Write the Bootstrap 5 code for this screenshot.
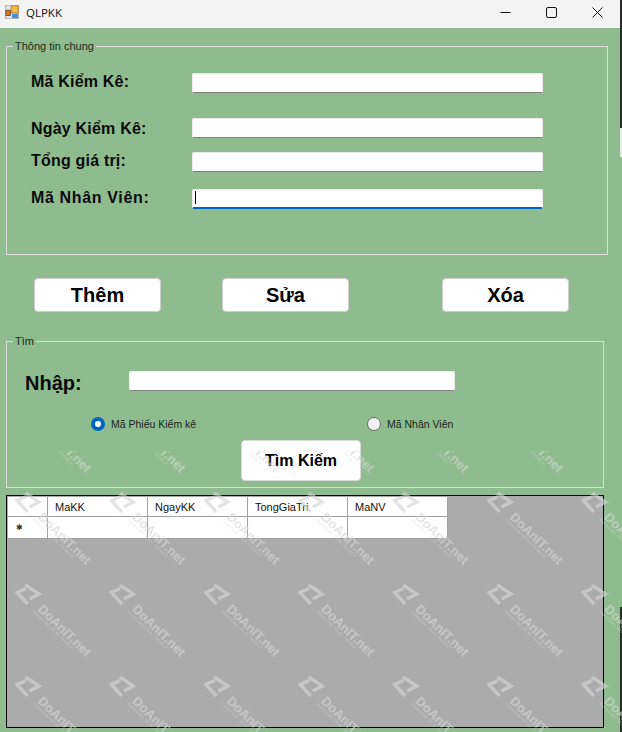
<!DOCTYPE html>
<html lang="vi">
<head>
<meta charset="utf-8">
<title>QLPKK</title>
<link href="https://cdn.jsdelivr.net/npm/bootstrap@5.3.0/dist/css/bootstrap.min.css" rel="stylesheet">
<style>
html,body{margin:0;height:732px;overflow:hidden}
body{background:#8fbc8f;font-family:"Liberation Sans",Arial,sans-serif;color:#000;position:relative;width:622px}
.win-edge-dark{position:absolute;left:620px;top:0;width:2px;height:128px;background:#2b2b2b}
.win-edge-low{position:absolute;left:620px;top:607px;width:2px;height:125px;background:#2b2b2b}
.win-edge-light{position:absolute;left:620px;top:128px;width:2px;height:29px;background:#e8e8e8}
.title-bar{height:28px;width:620px;background:#f3f3f3;padding:0 0 4px 5px}
.title-text{font:11.5px "Open Sans","Noto Sans",sans-serif;margin-left:7px;color:#111}
.win-ctrls{margin-left:auto}
.win-btn{width:46px;height:24px}
.grp{border:1px solid #dcdcdc;margin:0;padding:0;min-width:0;position:relative}
.grp legend{float:none;width:auto;margin:0;padding:0 2px;font-size:11px;line-height:11px;color:#1c2b1c;position:absolute;left:6px;top:-6px;background:#8fbc8f}
.grp-info{margin:18px 0 0 6px;width:602px;height:209px;padding:26px 0 0 24px}
.info-row{height:20px;font-weight:700;font-size:16px;letter-spacing:.2px;color:#0a0a0a}
.info-label{width:161px;line-height:18px}
.info-label-low{line-height:22px}
.info-label-wide{letter-spacing:.65px}
.info-gap-a{margin-top:25px}
.info-gap-b{margin-top:14px}
.info-gap-c{margin-top:17px}
.win-input.form-control{height:20px;padding:0;border:1px solid #ececec;border-bottom:1px solid #808080;border-radius:2px;background:#fff;font-size:11px;min-height:0}
.wide-input{width:351px;position:relative}
.wide-input .form-control{width:100%}
.focus-input.form-control{border-bottom:2px solid #0067c0}
.caret-mark{position:absolute;left:3px;top:2px;width:1px;height:13px;background:#000}
.actions{margin:23px 0 0 34px;height:34px}
.act-btn.btn{width:127px;height:34px;padding:0;background:#fff;border:1px solid #cfcfcf;border-radius:4px;font-size:20px;font-weight:700;color:#000;line-height:30px}
.act-mid{margin-left:61px}
.act-last{margin-left:93px}
.grp-find{margin:29px 0 0 6px;width:598px;height:147px;padding:29px 0 0 18px}
.find-row{height:20px}
.find-label{width:104px;font-size:20px;font-weight:700;color:#0a0a0a;line-height:25px}
.find-input{width:326px}
.radio-row{margin:26px 0 0 66px;height:14px;font-size:10.5px;color:#1a261a}
.radio-row .form-check-input{width:14px;height:14px;margin:0;border:1px solid #6b6b6b;background-color:#f2f2f2;flex:none}
.radio-row .form-check-input:checked{background-color:#fff;border:4px solid #0067c0;background-image:none}
.radio-label{margin-left:6px;line-height:14px;margin-bottom:0}
.radio-one{width:276px}
.find-btn.btn{display:block;margin:9px 0 0 216px;width:120px;height:41px;padding:0;background:#fff;border:1px solid #d8d8d8;border-radius:4px;font-size:16px;font-weight:700;color:#000}
.grid-box{margin:7px 0 0 6px;width:598px;height:233px;border:1px solid #000;background:#ababab;padding:1px}
.grid-tbl.table{width:auto;margin:0;table-layout:fixed;border-collapse:separate;border-spacing:0;font-size:11px;--bs-table-bg:#fff;--bs-table-color:#111}
.grid-tbl th,.grid-tbl td{padding:0 0 0 7px;width:100px;font-weight:400;border:0;border-right:1px solid #a0a0a0;border-bottom:1px solid #a0a0a0;line-height:14px;vertical-align:middle;box-shadow:none}
.grid-tbl thead th{height:20px}
.grid-tbl tbody th,.grid-tbl tbody td{height:22px}
.grid-tbl .row-head{width:40px;padding:0}
.grid-tbl .new-mark{font:8px "DejaVu Sans",sans-serif;padding-left:8px;color:#333}
.wm-layer{position:absolute;left:0;top:451px;width:622px;height:281px;pointer-events:none}
.wm-text{font-family:"Liberation Sans",Arial,sans-serif;font-size:13px;font-weight:700;fill:#d6d6d6}
.wm-sub{font-family:"Liberation Sans",Arial,sans-serif;font-size:3.6px;fill:#d6d6d6}
</style>
</head>
<body>
<div class="d-flex align-items-center title-bar">
  <svg width="14" height="14" viewBox="0 0 16 16"><rect x="0.5" y="0.5" width="15" height="15" fill="#e4e4e4" stroke="#b5b5b5"/><rect x="7" y="1" width="8" height="8" fill="#f5b94a" stroke="#b87a1e"/><rect x="1" y="6" width="5" height="6" fill="#d47a2c" stroke="#7a4315"/><rect x="8" y="10" width="7" height="5" fill="#3d93e0"/></svg>
  <span class="title-text">QLPKK</span>
  <div class="d-flex win-ctrls">
    <div class="d-flex align-items-center justify-content-center win-btn"><svg width="11" height="11" viewBox="0 0 11 11"><path d="M0.5 5.5H10.5" stroke="#111" stroke-width="1"/></svg></div>
    <div class="d-flex align-items-center justify-content-center win-btn"><svg width="11" height="11" viewBox="0 0 11 11"><rect x="0.5" y="0.5" width="10" height="10" rx="1.5" fill="none" stroke="#111"/></svg></div>
    <div class="d-flex align-items-center justify-content-center win-btn"><svg width="11" height="11" viewBox="0 0 11 11"><path d="M0.5 0.5L10.5 10.5M10.5 0.5L0.5 10.5" stroke="#111"/></svg></div>
  </div>
</div>

<fieldset class="grp grp-info">
  <legend>Thông tin chung</legend>
  <div class="d-flex info-row"><div class="info-label">Mã Kiểm Kê:</div><div class="wide-input"><input class="form-control win-input" type="text"></div></div>
  <div class="d-flex info-row info-gap-a"><div class="info-label info-label-low">Ngày Kiểm Kê:</div><div class="wide-input"><input class="form-control win-input" type="text"></div></div>
  <div class="d-flex info-row info-gap-b"><div class="info-label">Tổng giá trị:</div><div class="wide-input"><input class="form-control win-input" type="text"></div></div>
  <div class="d-flex info-row info-gap-c"><div class="info-label info-label-wide">Mã Nhân Viên:</div><div class="wide-input"><input class="form-control win-input focus-input" type="text"><span class="caret-mark"></span></div></div>
</fieldset>

<div class="d-flex actions">
  <button class="btn act-btn" type="button">Thêm</button>
  <button class="btn act-btn act-mid" type="button">Sửa</button>
  <button class="btn act-btn act-last" type="button">Xóa</button>
</div>

<fieldset class="grp grp-find">
  <legend>Tìm</legend>
  <div class="d-flex find-row"><div class="find-label">Nhập:</div><div class="find-input"><input class="form-control win-input" type="text"></div></div>
  <div class="d-flex radio-row">
    <div class="d-flex align-items-center radio-one"><input class="form-check-input" type="radio" name="k" id="r1" checked><label class="radio-label" for="r1">Mã Phiếu Kiểm kê</label></div>
    <div class="d-flex align-items-center"><input class="form-check-input" type="radio" name="k" id="r2"><label class="radio-label" for="r2">Mã Nhân Viên</label></div>
  </div>
  <button class="btn find-btn" type="button">Tìm Kiếm</button>
</fieldset>

<div class="grid-box">
  <table class="table grid-tbl">
    <thead><tr><th class="row-head"></th><th>MaKK</th><th>NgayKK</th><th>TongGiaTri</th><th>MaNV</th></tr></thead>
    <tbody><tr><th class="row-head new-mark">✱</th><td></td><td></td><td></td><td></td></tr></tbody>
  </table>
</div>

<div class="win-edge-dark"></div><div class="win-edge-light"></div><div class="win-edge-low"></div>
<svg class="wm-layer" viewBox="0 0 622 281" aria-hidden="true">
  <defs>
    <pattern id="wm" x="15" y="-51" width="94.4" height="92" patternUnits="userSpaceOnUse">
      <g opacity="0.65">
        <path d="M11 4.5L2 8.5L12.5 20M10.5 1L24 10L14.5 15" fill="none" stroke="#d6d6d6" stroke-width="3.4"/>
        <text class="wm-text" transform="translate(22 26) rotate(44)">DoAnIT.net</text>
        <text class="wm-sub" transform="translate(18 28) rotate(44)">Source Code - Đồ Án - Tài Liệu IT</text>
      </g>
    </pattern>
  </defs>
  <rect width="622" height="281" fill="url(#wm)"/>
</svg>
<script src="https://cdn.jsdelivr.net/npm/bootstrap@5.3.0/dist/js/bootstrap.bundle.min.js"></script>
</body>
</html>
